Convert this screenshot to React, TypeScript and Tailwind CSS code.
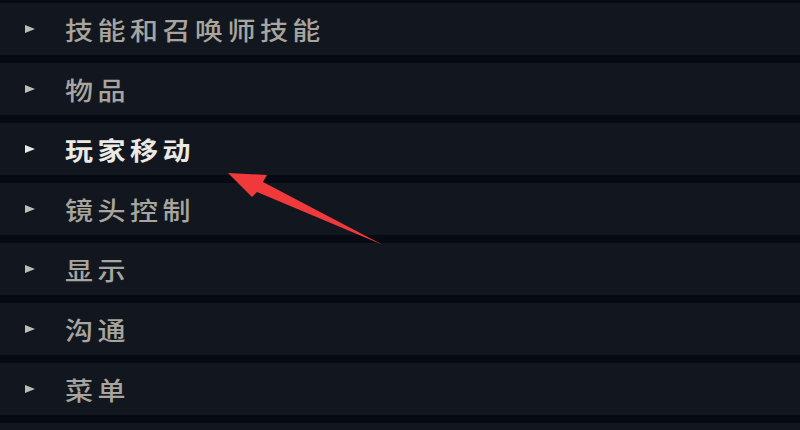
import React from "react";

const items = [
  { label: "技能和召唤师技能", active: false },
  { label: "物品", active: false },
  { label: "玩家移动", active: true },
  { label: "镜头控制", active: false },
  { label: "显示", active: false },
  { label: "沟通", active: false },
  { label: "菜单", active: false },
  { label: "", active: false },
];

export default function App() {
  return (
    <div
      className="relative w-[800px] h-[430px] overflow-hidden bg-[#050a13] pt-[3px] flex flex-col gap-[8px]"
      style={{ fontFamily: '"Noto Sans CJK SC", "Noto Sans", sans-serif' }}
    >
      {items.map((it, i) => (
        <div
          key={i}
          className="shrink-0 h-[52px] bg-[#12171f] flex items-center"
        >
          <div className="w-[65px] flex items-center pl-[24px]">
            <svg width="12" height="10" viewBox="0 0 12 10">
              <polygon
                points="1,1 11,5 1,9"
                fill={it.active ? "#e8e8e8" : "#bdbdb8"}
              />
            </svg>
          </div>
          <span
            className={
              "inline-block origin-left scale-x-[1.12] text-[25px] leading-none tracking-[4px] " +
              (it.active ? "font-bold text-[#ebe9e4]" : "font-medium text-[#a7a59d]")
            }
          >
            {it.label}
          </span>
        </div>
      ))}
      <svg
        className="absolute left-0 top-0 pointer-events-none"
        width="800"
        height="430"
        viewBox="0 0 800 430"
      >
        <polygon
          points="228,173 267,175 263,182 383,245 257,192 252,197"
          fill="#f0393b"
        />
      </svg>
    </div>
  );
}
